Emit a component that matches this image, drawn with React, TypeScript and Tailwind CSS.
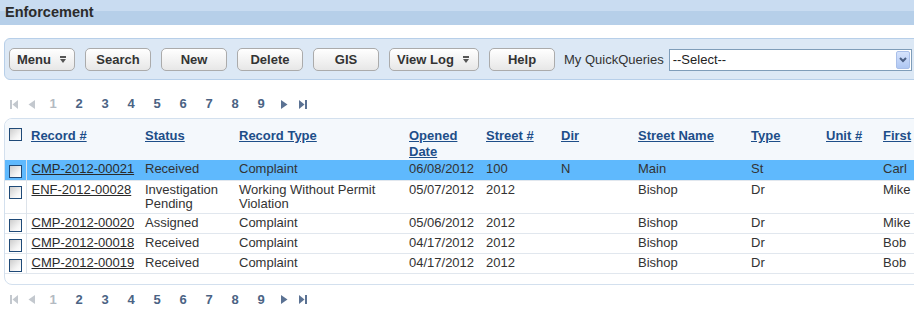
import React from 'react';

type Row = {
  id: string;
  status: string;
  type: string;
  opened: string;
  num: string;
  dir: string;
  street: string;
  stype: string;
  unit: string;
  first: string;
  selected?: boolean;
};

const rows: Row[] = [
  { id: 'CMP-2012-00021', status: 'Received', type: 'Complaint', opened: '06/08/2012', num: '100', dir: 'N', street: 'Main', stype: 'St', unit: '', first: 'Carl', selected: true },
  { id: 'ENF-2012-00028', status: 'Investigation Pending', type: 'Working Without Permit Violation', opened: '05/07/2012', num: '2012', dir: '', street: 'Bishop', stype: 'Dr', unit: '', first: 'Mike' },
  { id: 'CMP-2012-00020', status: 'Assigned', type: 'Complaint', opened: '05/06/2012', num: '2012', dir: '', street: 'Bishop', stype: 'Dr', unit: '', first: 'Mike' },
  { id: 'CMP-2012-00018', status: 'Received', type: 'Complaint', opened: '04/17/2012', num: '2012', dir: '', street: 'Bishop', stype: 'Dr', unit: '', first: 'Bob' },
  { id: 'CMP-2012-00019', status: 'Received', type: 'Complaint', opened: '04/17/2012', num: '2012', dir: '', street: 'Bishop', stype: 'Dr', unit: '', first: 'Bob' },
];

const headers = ['Record #', 'Status', 'Record Type', 'Opened Date', 'Street #', 'Dir', 'Street Name', 'Type', 'Unit #', 'First'];
const colWidths = [114, 94, 170, 77, 75, 77, 113, 75, 57];

const DropIcon = () => (
  <svg width="6" height="7" viewBox="0 0 6 7">
    <rect x="0" y="0" width="6" height="2" fill="#555" />
    <polygon points="0,3 6,3 3,7" fill="#555" />
  </svg>
);

const Checkbox = () => (
  <span className="block w-[13px] h-[13px] border border-[#1f4a78] bg-[linear-gradient(135deg,#cdcdcd,#f4f4f4_65%,#ffffff)]" />
);

const Btn = ({ label, dropdown, wide }: { label: string; dropdown?: boolean; wide?: boolean }) => (
  <button
    className={`flex items-center h-[23px] rounded-[5px] border border-[#ababab] bg-[linear-gradient(#ffffff,#e7e7e7)] text-[13px] font-bold text-[#333] ${
      wide ? 'w-[90px]' : 'w-[66px]'
    } ${dropdown ? 'justify-start pl-[7px] gap-[9px]' : 'justify-center'}`}
  >
    <span>{label}</span>
    {dropdown && <DropIcon />}
  </button>
);

const Pager = () => {
  const dim = '#c3c8ce';
  const live = '#5b7293';
  return (
    <div className="flex items-center h-[18px] pl-[10px] text-[13px] font-bold">
      <svg width="8" height="9" viewBox="0 0 8 9">
        <rect x="0" y="0" width="2" height="9" fill={dim} />
        <polygon points="8,0 8,9 2.5,4.5" fill={dim} />
      </svg>
      <svg width="7" height="9" viewBox="0 0 7 9" className="ml-[10px]">
        <polygon points="7,0 7,9 0.5,4.5" fill={dim} />
      </svg>
      <div className="flex ml-[5px]">
        {[1, 2, 3, 4, 5, 6, 7, 8, 9].map((n) => (
          <span key={n} className={`w-[26px] text-center ${n === 1 ? 'text-[#b3bac2]' : 'text-[#4b6384]'}`}>
            {n}
          </span>
        ))}
      </div>
      <svg width="7" height="9" viewBox="0 0 7 9" className="ml-[7px]">
        <polygon points="0,0 0,9 6.5,4.5" fill={live} />
      </svg>
      <svg width="8" height="9" viewBox="0 0 8 9" className="ml-[11px]">
        <polygon points="0,0 0,9 5.5,4.5" fill={live} />
        <rect x="6" y="0" width="2" height="9" fill={live} />
      </svg>
    </div>
  );
};

export default function App() {
  return (
    <div className="w-[914px] h-[310px] overflow-hidden bg-white font-['Liberation_Sans',Arial,sans-serif] text-[#333]">
      <div className="h-[25px] flex items-center pl-[5px] bg-[linear-gradient(#c9dcf1_0%,#c9dcf1_44%,#b6cfe9_44%,#b6cfe9_100%)]">
        <span className="text-[14.5px] font-bold text-[#2b2b2b]">Enforcement</span>
      </div>

      <div className="mt-[13px] ml-[4px] w-[1000px] h-[42px] rounded-[6px] border border-[#b7cfe9] bg-[#dce8f5] flex items-center pl-[4px] pt-[1px]">
        <div className="flex items-center gap-[10px]">
          <Btn label="Menu" dropdown />
          <Btn label="Search" />
          <Btn label="New" />
          <Btn label="Delete" />
          <Btn label="GIS" />
          <Btn label="View Log" dropdown wide />
          <Btn label="Help" />
        </div>
        <span className="ml-[9px] text-[13px] text-[#333]">My QuickQueries</span>
        <div className="ml-[5px] w-[243px] h-[22px] border border-[#7f9db9] bg-white flex items-center pl-[3px] pr-[1px]">
          <span className="text-[13px] text-[#222]">--Select--</span>
          <div className="ml-auto w-[14px] h-[18px] rounded-[2px] border border-[#a9bfe9] bg-[linear-gradient(#d6e3fc,#afc7f3)] flex items-center justify-center">
            <svg width="8" height="6" viewBox="0 0 8 6">
              <polyline points="1,1 4,4 7,1" fill="none" stroke="#4b5f84" strokeWidth="2" />
            </svg>
          </div>
        </div>
      </div>

      <div className="mt-[15px]">
        <Pager />
      </div>

      <div className="mt-[5px] ml-[4px] w-[1000px] rounded-tl-[8px] rounded-bl-[8px] border border-[#d3e0ee] pb-[10px] overflow-hidden">
        <table className="table-fixed border-collapse w-full text-[13px]">
          <colgroup>
            <col className="w-[21px]" />
            {colWidths.map((w, i) => (
              <col key={i} style={{ width: w }} />
            ))}
            <col />
          </colgroup>
          <thead>
            <tr className="bg-[#f4f8fc]">
              <th className="pl-[4px] pt-[9px] align-top">
                <Checkbox />
              </th>
              {headers.map((h) => (
                <th key={h} className="pl-[5px] pt-[9px] pb-0 align-top text-left leading-[16px] font-bold">
                  <span className="underline text-[#1d4e89]">{h}</span>
                </th>
              ))}
            </tr>
          </thead>
          <tbody>
            {rows.map((r) => {
              const cells = [r.status, r.type, r.opened, r.num, r.dir, r.street, r.stype, r.unit, r.first];
              return (
                <tr key={r.id} className={`h-[20px] border-b border-[#e1e7ee] ${r.selected ? 'bg-[#5fb9fd]' : ''}`}>
                  <td className="pl-[4px] pt-[5px] align-top border-r border-[#dde3ea]">
                    <Checkbox />
                  </td>
                  <td className="pl-[5px] pt-[2px] pb-[2px] align-top leading-[14px]">
                    <span className="underline text-[#2a2a2a]">{r.id}</span>
                  </td>
                  {cells.map((c, i) => (
                    <td key={i} className="pl-[5px] pt-[2px] pb-[2px] align-top leading-[14px] text-[#333]">
                      {c}
                    </td>
                  ))}
                </tr>
              );
            })}
          </tbody>
        </table>
      </div>

      <div className="mt-[6px]">
        <Pager />
      </div>
    </div>
  );
}
